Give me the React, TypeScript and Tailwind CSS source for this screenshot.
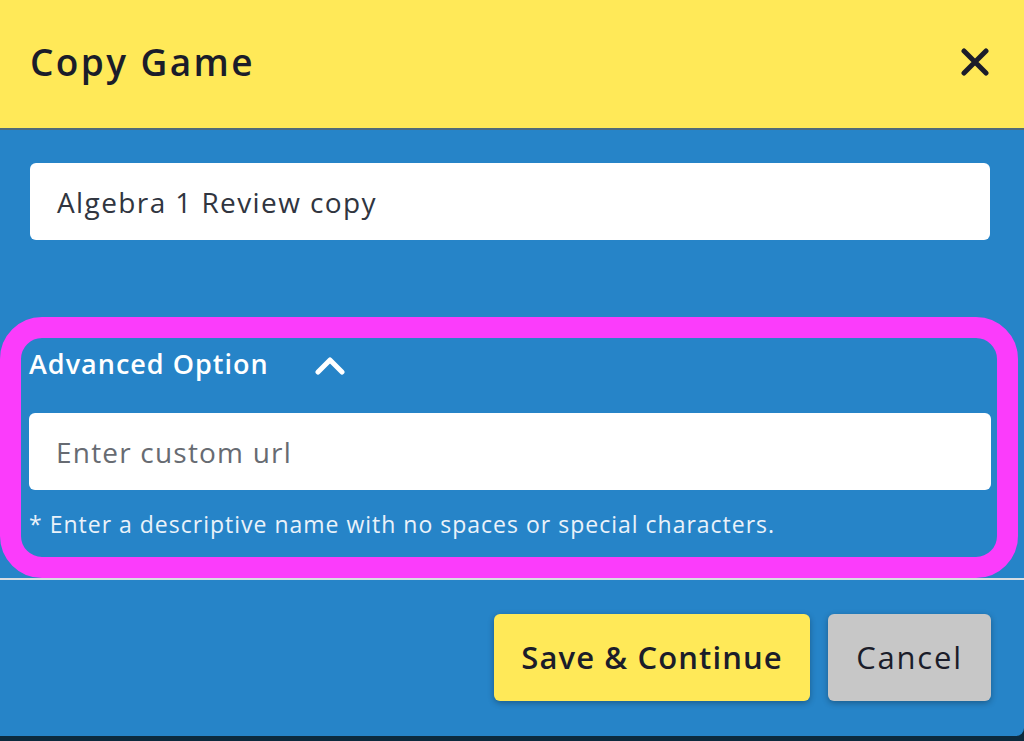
const font = "font-['Open_Sans','Lato',sans-serif]";

const CloseIcon = () => (
  <svg width="28" height="28" viewBox="0 0 28 28" className="block">
    <path d="M3 3 L25 25 M25 3 L3 25" stroke="#1b1d2a" strokeWidth="5" strokeLinecap="round" fill="none" />
  </svg>
);

const ChevronUp = () => (
  <svg width="30" height="20" viewBox="0 0 30 20" className="block">
    <path d="M3 16 L15 4 L27 16" stroke="#ffffff" strokeWidth="5" strokeLinecap="round" strokeLinejoin="round" fill="none" />
  </svg>
);

export default function App() {
  return (
    <div className={`w-[1024px] h-[741px] overflow-hidden bg-[#0c2a3d] ${font}`}>
      <div className="h-[736px] w-[1024px] bg-[#2684c8] rounded-br-[8px] flex flex-col">
        {/* Header */}
        <div className="h-[130px] shrink-0 bg-[#ffe958] border-b-2 border-[#4f6b7a] flex items-center justify-between pl-[30px] pr-[35px]">
          <h1 className="text-[37px] font-semibold text-[#1b1d2a] tracking-[2.4px] -mt-[4px]">Copy Game</h1>
          <button className="-mt-[4px]">
            <CloseIcon />
          </button>
        </div>

        {/* Body */}
        <div className="pt-[33px] px-[30px] pr-[34px]">
          <div className="h-[77px] bg-white rounded-[6px] flex items-center px-[27px]">
            <span className="text-[28px] text-[#303540] tracking-[1.4px]">Algebra 1 Review copy</span>
          </div>
        </div>

        {/* Advanced option (highlighted) */}
        <div className="mt-[77px] mr-[6px] h-[261px] border-[21px] border-[#fb3cfb] rounded-[42px] pl-[8px] pr-[6px] pt-[8px]">
          <div className="flex items-center gap-[46px] h-[36px]">
            <span className="text-[27px] font-semibold text-white tracking-[1px]">Advanced Option</span>
            <span className="mt-[4px]">
              <ChevronUp />
            </span>
          </div>
          <div className="mt-[31px] h-[77px] bg-white rounded-[6px] flex items-center px-[27px]">
            <span className="text-[28px] text-[#676b72] tracking-[1.2px]">Enter custom url</span>
          </div>
          <p className="mt-[20px] text-[23px] text-[#eaf2fa] leading-[28px] tracking-[1px]">
            * Enter a descriptive name with no spaces or special characters.
          </p>
        </div>

        <div className="h-[2px] bg-[#d6dde3]" />

        {/* Footer */}
        <div className="flex justify-end gap-[18px] pt-[34px] pr-[33px]">
          <button className="w-[316px] h-[87px] bg-[#ffe958] rounded-[6px] shadow-[0_2px_6px_rgba(0,0,0,0.3)] text-[31px] font-semibold text-[#1b1d2a] tracking-[1.1px]">
            Save &amp; Continue
          </button>
          <button className="w-[163px] h-[87px] bg-[#c7c7c7] rounded-[6px] shadow-[0_2px_6px_rgba(0,0,0,0.3)] text-[31px] font-medium text-[#1b1d2a] tracking-[1.8px]">
            Cancel
          </button>
        </div>
      </div>
    </div>
  );
}
